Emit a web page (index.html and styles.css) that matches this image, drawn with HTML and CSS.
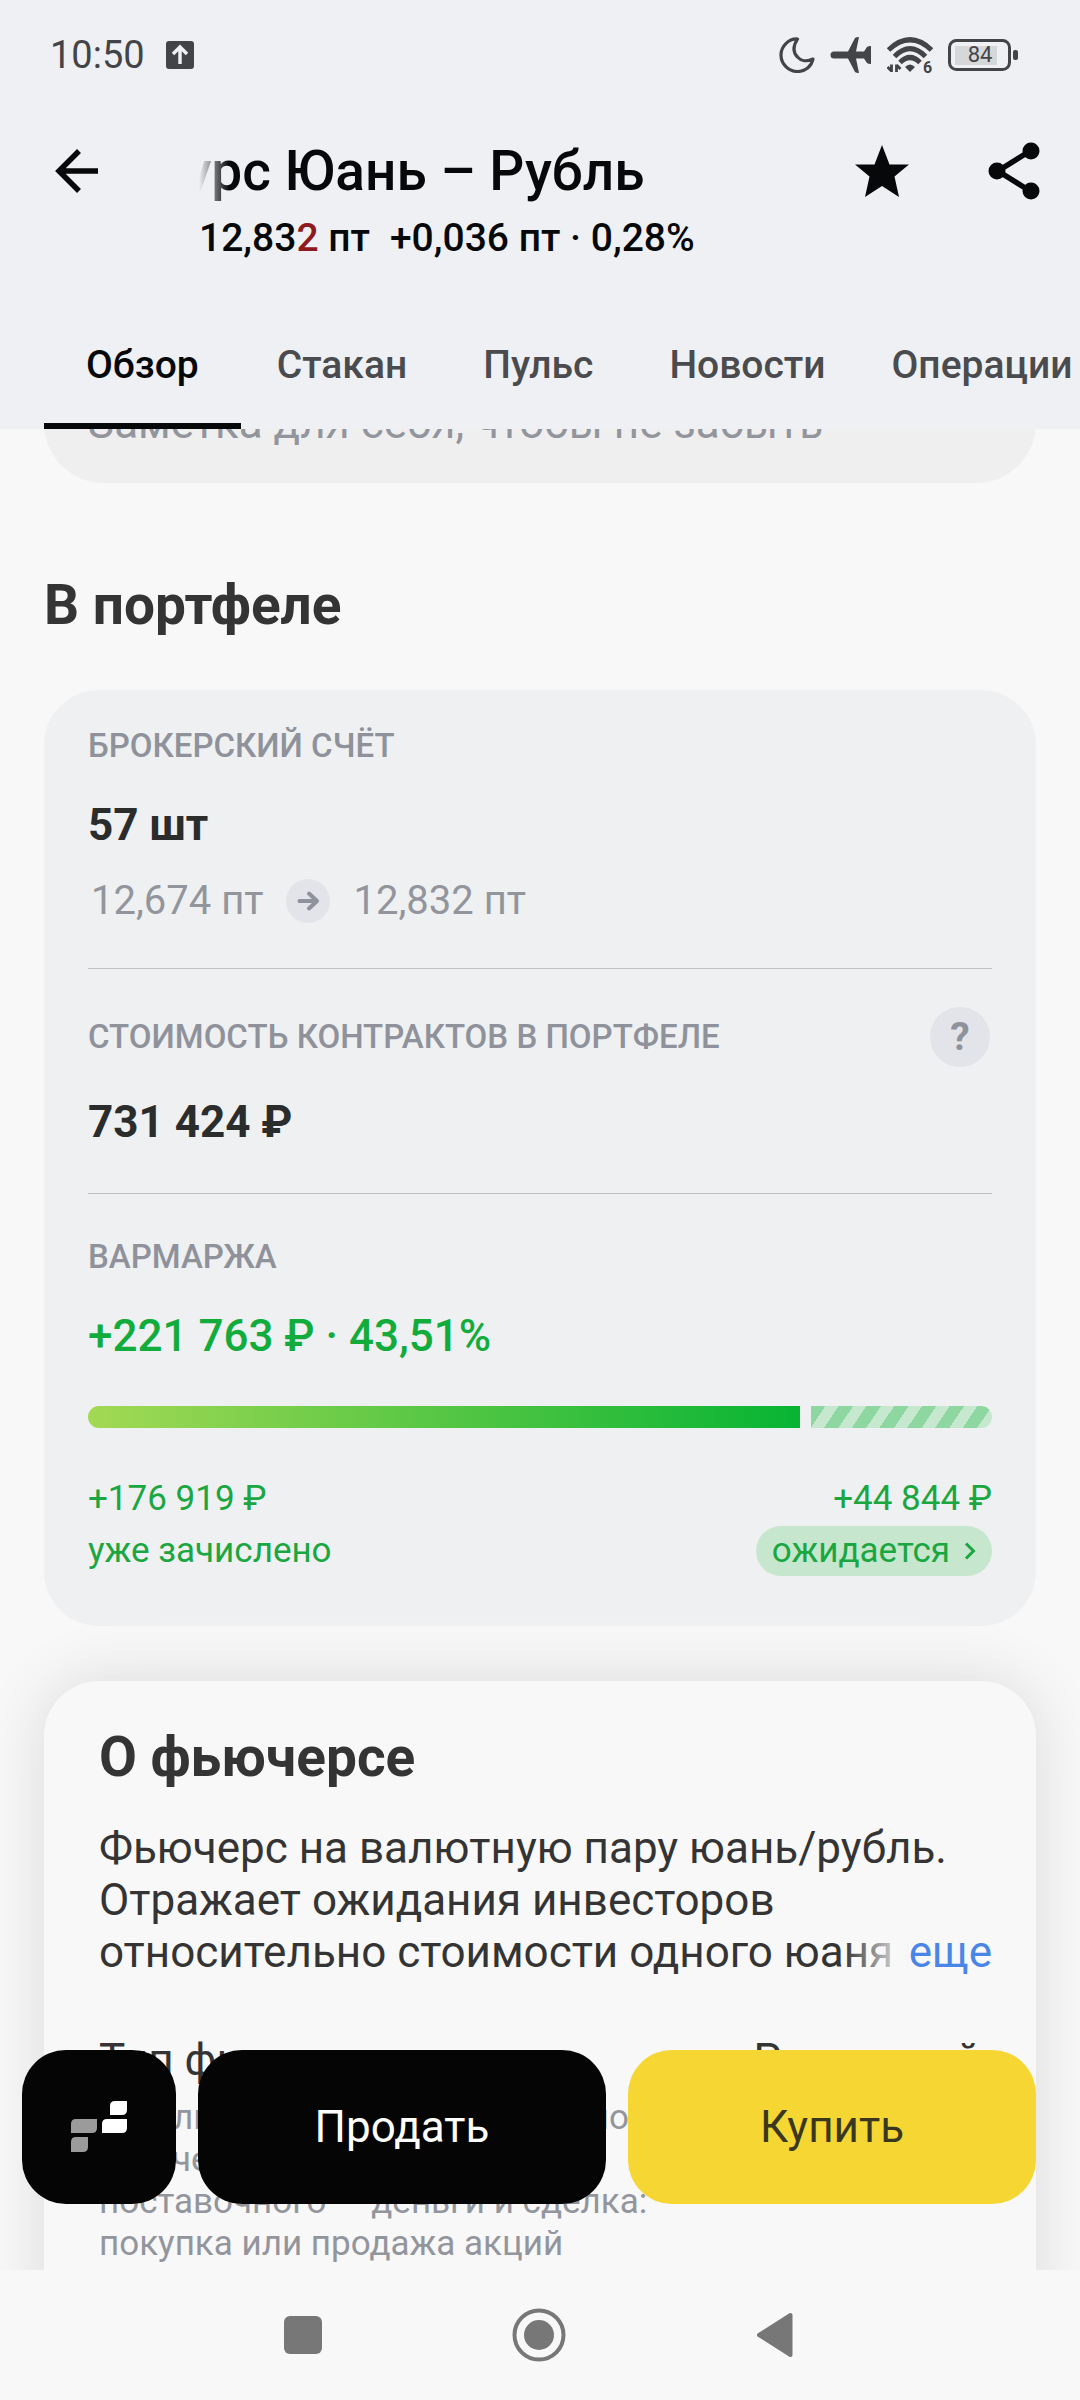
FILE: index.html
```html
<!DOCTYPE html>
<html lang="ru">
<head>
<meta charset="utf-8">
<meta name="viewport" content="width=device-width, initial-scale=1">
<title>Курс Юань – Рубль</title>
<link rel="stylesheet" href="styles.css">
</head>
<body>
<header class="header">
  <div class="status">
    <span class="status-time">10:50</span>
    <svg class="status-upload" width="28" height="28" viewBox="0 0 28 28"><rect width="28" height="28" rx="3" fill="#434447"/><path d="M14 23V7M7 13l7-7 7 7" fill="none" stroke="#f0f1f3" stroke-width="3.4"/></svg>
    <div class="status-icons">
      <svg width="36" height="36" viewBox="0 0 36 36"><path d="M18.500 2C9.500 1.500 2 9.500 2 18c0 9 7.500 16.500 16.500 16.500 8 0 14-5 15.500-12.500-6 3-12 2-15.500-2-4.500-4.500-4.500-11 0-18z" fill="none" stroke="#434447" stroke-width="3.200" stroke-linejoin="round"/></svg>
      <svg width="42" height="36" viewBox="0 0 42 36"><path d="M4 14.500h14L25 1q1-1 4-1l-3 14.500h8l3-4.500q1-1 4-1v18q-3 0-4-1l-3-4.500h-8L29 36q-3 0-4-1l-7-13.500H4a3.500 3.500 0 0 1 0-7z" fill="#434447"/></svg>
      <svg width="46" height="38" viewBox="0 0 46 38"><g fill="none" stroke="#434447" stroke-width="5"><path d="M1.500 14Q23-6.500 44.500 14"/><path d="M7.500 20.500Q23 5 38.500 20.500"/><path d="M13 26.500Q23 16.500 33 26.500"/></g><path d="M18 31q5-5 10 0l-5 5z" fill="#434447"/><path d="M4.500 36V28.500M4.500 35l-4-4M9.500 36V28.500M9.500 29l4 4" stroke="#434447" stroke-width="2.800" fill="none"/><text x="36" y="37" class="wifi-gen">6</text></svg>
      <div class="battery"><svg width="70" height="32" viewBox="0 0 70 32"><rect x="7" y="7" width="42" height="19" fill="#d6d7d9"/><rect x="1.500" y="1.500" width="60" height="29" rx="7" fill="none" stroke="#434447" stroke-width="3"/><rect x="65" y="11" width="5" height="10" rx="2" fill="#434447"/></svg><span class="battery-level">84</span></div>
    </div>
  </div>
  <div class="appbar">
    <button class="icon-button back" type="button" aria-label="Назад"><svg width="44" height="44" viewBox="0 0 44 44"><path d="M43 22H4M24 2L4 22l20 20" fill="none" stroke="#070809" stroke-width="5.500"/></svg></button>
    <div class="instrument">
      <h1 class="title">Курс Юань – Рубль</h1>
      <p class="quote"><span>12,83<span class="tick-down">2</span> пт</span><span>+0,036 пт · 0,28%</span></p>
    </div>
    <button class="icon-button" type="button" aria-label="В избранном"><svg width="54" height="54" viewBox="0 0 54 54"><path d="M27 1l7.500 19.500H54L39.500 32.500 44 53 27 42 10 53l4.500-20.500L0 20.500h19.500z" fill="#070809"/></svg></button>
    <button class="icon-button" type="button" aria-label="Поделиться"><svg width="52" height="58" viewBox="0 0 52 58"><path d="M42 9L10 29l32 20" fill="none" stroke="#070809" stroke-width="5.500"/><g fill="#070809"><circle cx="43" cy="9" r="8.500"/><circle cx="9" cy="29" r="8.500"/><circle cx="43" cy="49" r="8.500"/></g></svg></button>
  </div>
  <nav class="tabs">
    <a class="tab tab-active" href="#overview">Обзор</a>
    <a class="tab" href="#book">Стакан</a>
    <a class="tab" href="#pulse">Пульс</a>
    <a class="tab" href="#news">Новости</a>
    <a class="tab tab-last" href="#operations">Операции</a>
  </nav>
</header>

<div class="screen">
  <main class="content" id="overview">
    <input class="note" type="text" aria-label="Заметка" placeholder="Заметка для себя, чтобы не забыть">
    <h2 class="heading">В портфеле</h2>
    <section class="card portfolio">
      <div class="block">
        <h3 class="label">БРОКЕРСКИЙ СЧЁТ</h3>
        <p class="value">57 шт</p>
        <p class="prices"><span>12,674 пт</span><svg width="44" height="44" viewBox="0 0 44 44"><circle cx="22" cy="22" r="22" fill="#e3e4e9"/><path d="M13.500 22H30M23 14.500l8 7.500-8 7.500" fill="none" stroke="#8f929c" stroke-width="4" stroke-linecap="round" stroke-linejoin="round"/></svg><span>12,832 пт</span></p>
      </div>
      <div class="block">
        <div class="label-row"><h3 class="label">СТОИМОСТЬ КОНТРАКТОВ В ПОРТФЕЛЕ</h3><button class="help" type="button" aria-label="Справка">?</button></div>
        <p class="value">731 424 ₽</p>
      </div>
      <div class="block margin">
        <h3 class="label">ВАРМАРЖА</h3>
        <p class="value value-gain">+221 763 ₽ · 43,51%</p>
        <div class="progress">
          <div class="progress-done" style="flex-grow: 176919"></div>
          <div class="progress-wait" style="flex-grow: 44844"></div>
        </div>
        <div class="split">
          <div class="split-side"><span>+176 919 ₽</span><span>уже зачислено</span></div>
          <div class="split-side split-end"><span>+44 844 ₽</span><button class="pill" type="button">ожидается<svg width="12" height="18" viewBox="0 0 12 18"><path d="M2 1.500L9.500 9 2 16.500" fill="none" stroke="#1aa640" stroke-width="3"/></svg></button></div>
        </div>
      </div>
    </section>
    <section class="card about">
      <h2 class="heading">О фьючерсе</h2>
      <div class="summary">
        <p class="summary-text">Фьючерс на валютную пару юань/рубль. Отражает ожидания инвесторов относительно стоимости одного юаня к рублю.</p>
        <a class="more" href="#more">еще</a>
      </div>
      <div class="fact"><span>Тип фьючерса</span><span class="fact-value">Расчетный</span></div>
      <p class="fact-note">Результат исполнения расчетного фьючерса — деньги, а поставочного — деньги и сделка: покупка или продажа акций</p>
    </section>
  </main>
  <div class="trade">
    <button class="trade-button trade-terminal" type="button" aria-label="Терминал"><svg width="56" height="52" viewBox="0 0 56 52"><g fill="#fff"><path d="M44 0h12v9q0 5-5 5H39V5q0-5 5-5z"/><path d="M36 18h20v9q0 5-5 5H31v-9q0-5 5-5z"/></g><g fill="#9b9b9b"><path d="M5 18h21v9q0 5-5 5H0v-9q0-5 5-5z"/><path d="M5 36h12v10q0 5-5 5H0V41q0-5 5-5z"/></g></svg></button>
    <button class="trade-button" type="button">Продать</button>
    <button class="trade-button trade-buy" type="button">Купить</button>
  </div>
</div>

<nav class="system">
  <button class="system-button" type="button" aria-label="Недавние"><svg width="40" height="40" viewBox="0 0 40 40"><rect x="1" y="1" width="38" height="38" rx="6" fill="#777"/></svg></button>
  <button class="system-button" type="button" aria-label="Домой"><svg width="54" height="54" viewBox="0 0 54 54"><circle cx="27" cy="27" r="24.500" fill="none" stroke="#777" stroke-width="4"/><circle cx="27" cy="27" r="15" fill="#777"/></svg></button>
  <button class="system-button" type="button" aria-label="Назад"><svg width="38" height="46" viewBox="0 0 38 46"><path d="M34.500 3v40L3 23z" fill="#777" stroke="#777" stroke-width="4" stroke-linejoin="round"/></svg></button>
</nav>
</body>
</html>
```
FILE: styles.css
```css
* { box-sizing: border-box; }

body {
  display: flex;
  flex-direction: column;
  height: 100vh;
  margin: 0;
  overflow: hidden;
  background: #f8f8f8;
  color: #343434;
  font-family: Roboto, "Noto Sans", sans-serif;
  font-size: 44px;
  line-height: 52px;
}

h1, h2, h3, p { margin: 0; }
a { color: inherit; text-decoration: none; }
svg { display: block; flex: none; }

button {
  display: flex;
  align-items: center;
  justify-content: center;
  padding: 0;
  border: 0;
  background: none;
  color: inherit;
  font: inherit;
}

/* Header */
.header {
  position: relative;
  z-index: 1;
  flex: none;
  background: #eef0f3;
  color: #070809;
}

.status {
  display: flex;
  align-items: center;
  height: 110px;
  padding: 0 62px 0 50px;
  color: #434447;
}
.status-time { font-size: 38px; }
.status-upload { margin-left: 21px; }
.status-icons {
  display: flex;
  align-items: center;
  gap: 15px;
  margin-left: auto;
}
.wifi-gen { font-size: 16px; font-weight: 700; fill: #434447; }
.battery { position: relative; }
.battery-level {
  position: absolute;
  inset: 0 6px 0 0;
  font-size: 22px;
  line-height: 32px;
  text-align: center;
}

.appbar {
  display: flex;
  align-items: flex-start;
  gap: 66px;
  padding: 29px 33px 39px 44px;
}
.icon-button { flex: none; width: 66px; height: 64px; }
.back { margin-right: 23px; }
.instrument { flex: 1; min-width: 0; }
.title {
  overflow: hidden;
  font-size: 55px;
  font-weight: 500;
  line-height: 64px;
  text-indent: -49px;
  white-space: nowrap;
  -webkit-mask-image: linear-gradient(90deg, transparent, #000 30px);
  mask-image: linear-gradient(90deg, transparent, #000 30px);
}
.quote {
  display: flex;
  gap: 20px;
  margin-top: 11px;
  font-size: 39px;
  font-weight: 500;
  line-height: 48px;
  white-space: nowrap;
}
.tick-down { color: #8e1a1e; }

.tabs {
  display: flex;
  padding-left: 44px;
  overflow: hidden;
  color: #4a4b4e;
  font-size: 39px;
  font-weight: 500;
}
.tab {
  flex: none;
  padding: 0 38px;
  line-height: 128px;
}
.tab-active {
  padding: 0 42px;
  color: #070809;
  box-shadow: inset 0 -6px #070809;
}
.tab-active + .tab { padding-left: 36px; }
.tab-last { padding-left: 28px; }

/* Scrolled content */
.screen {
  position: relative;
  flex: 1;
  min-height: 0;
}
.content {
  display: flex;
  flex-direction: column;
  height: 100%;
  padding: 0 44px;
  overflow: hidden;
}
.content > * { flex: none; }

.note {
  width: 100%;
  height: 120px;
  margin-top: -66px;
  padding: 0 44px;
  border: 0;
  border-radius: 60px;
  background: #efefef;
  font: inherit;
}
.note::placeholder { color: #93959d; opacity: 1; }

.heading {
  font-size: 55px;
  font-weight: 700;
  line-height: 64px;
}
.content > .heading { margin-top: 90px; }

.card { border-radius: 55px; }
.portfolio {
  margin-top: 53px;
  padding: 0 44px 50px;
  background: #eef0f1;
}
.block { padding: 36px 0 45px; }
.block + .block { border-top: 1px solid #bfc2c2; }
.block.margin { padding: 43px 0 0; }
.label {
  color: #8f929b;
  font-size: 33px;
  font-weight: 500;
  line-height: 40px;
}
.label-row {
  display: flex;
  align-items: center;
  justify-content: space-between;
  padding-top: 2px;
}
.help {
  width: 60px;
  height: 60px;
  margin-right: 2px;
  border-radius: 50%;
  background: #e3e4e9;
  color: #8f929b;
  font-size: 39px;
  font-weight: 700;
}
.value {
  margin-top: 33px;
  color: #2b2c2c;
  font-weight: 700;
}
.label-row + .value { margin-top: 29px; }
.value-gain { color: #12ac3c; font-weight: 500; }
.prices {
  display: flex;
  align-items: center;
  gap: 22px;
  margin-top: 28px;
  padding-left: 3px;
  color: #93959d;
  font-size: 40px;
  line-height: 44px;
}
.prices > :last-child { padding-left: 2px; }

.progress {
  display: flex;
  gap: 11px;
  height: 22px;
  margin-top: 44px;
}
.progress-done {
  flex-basis: 0;
  border-radius: 11px 0 0 11px;
  background: linear-gradient(90deg, #a3d954, #07b434);
}
.progress-wait {
  flex-basis: 0;
  border-radius: 0 11px 11px 0;
  background: repeating-linear-gradient(124deg, #8ed7a1 0 12px, #c6e8cf 12px 23px);
}

.split {
  display: flex;
  justify-content: space-between;
  margin-top: 46px;
  color: #1aa640;
  font-size: 35px;
  line-height: 50px;
}
.split-side {
  display: flex;
  flex-direction: column;
  gap: 2px;
}
.split-end { align-items: flex-end; }
.pill {
  gap: 14px;
  height: 50px;
  padding: 0 16px;
  border-radius: 25px;
  background: #c6e6ce;
}

.about {
  min-height: 800px;
  margin-top: 55px;
  padding: 44px 44px 44px 55px;
  background: #f8f8f8;
  box-shadow: 0 0 66px rgba(0, 0, 0, 0.12);
}
.summary {
  position: relative;
  height: 156px;
  margin-top: 33px;
  overflow: hidden;
}
.more {
  position: absolute;
  right: 0;
  bottom: 0;
  padding-left: 66px;
  background: linear-gradient(90deg, rgba(248, 248, 248, 0), #f8f8f8 66px);
  color: #4a86e8;
}
.fact {
  display: flex;
  justify-content: space-between;
  margin-top: 56px;
}
.fact-value { padding-right: 11px; }
.fact-note {
  max-width: 570px;
  margin-top: 11px;
  color: #93959d;
  font-size: 35px;
  line-height: 42px;
}

/* Buttons over the content */
.trade {
  position: absolute;
  right: 44px;
  bottom: 66px;
  left: 22px;
  display: flex;
  gap: 22px;
}
.trade-button {
  flex: 1;
  height: 154px;
  border-radius: 44px;
  background: #050505;
  color: #fff;
}
.trade-terminal { flex: none; width: 154px; }
.trade-buy { background: #f5d633; color: #3a371f; }

/* System navigation */
.system {
  position: relative;
  display: flex;
  flex: none;
  align-items: center;
  justify-content: center;
  gap: 176px;
  height: 130px;
  padding-right: 2px;
  background: #f8f8f8;
}
.system-button { width: 60px; height: 60px; }
```
